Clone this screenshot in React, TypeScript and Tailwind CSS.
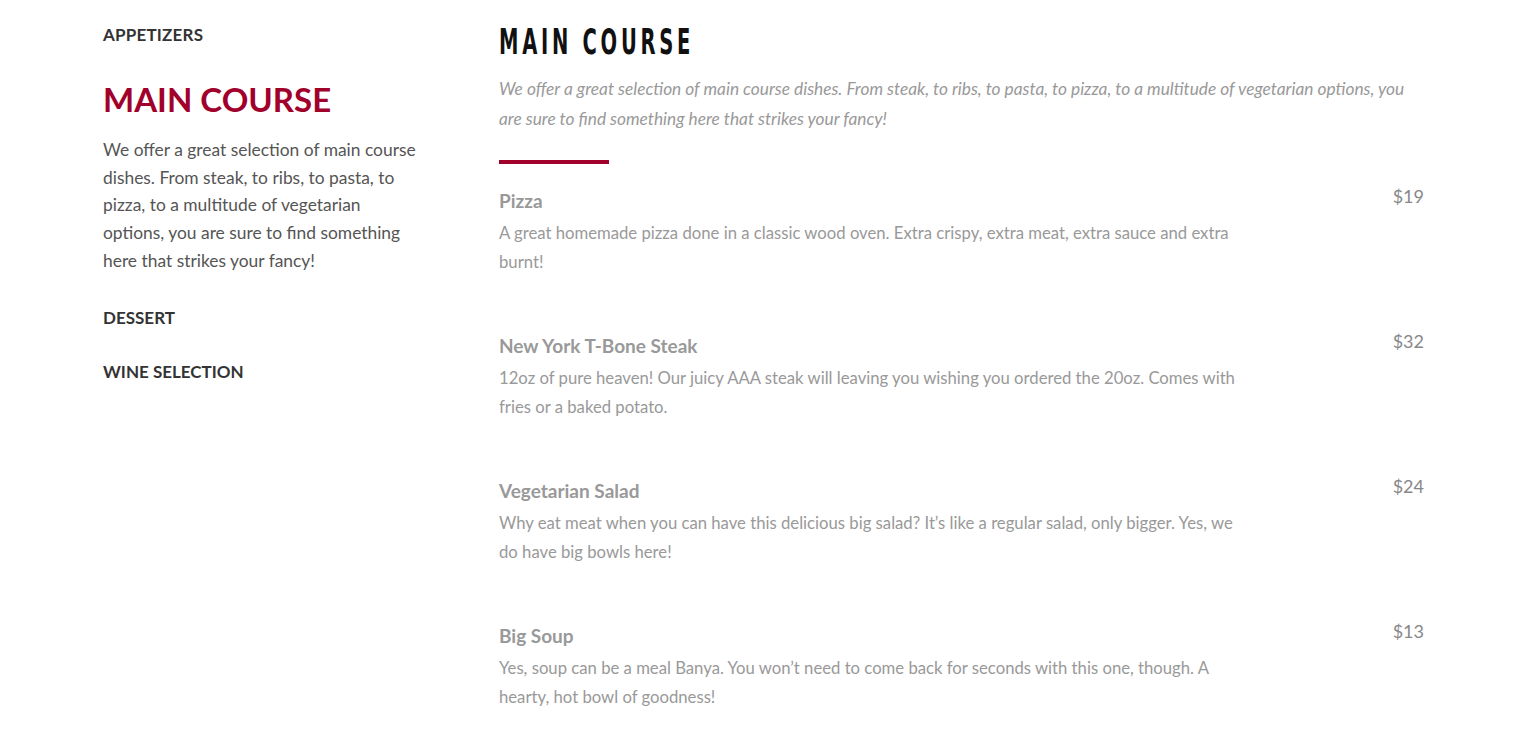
import React from "react";

const items = [
  {
    name: "Pizza",
    price: "$19",
    desc: "A great homemade pizza done in a classic wood oven. Extra crispy, extra meat, extra sauce and extra burnt!",
  },
  {
    name: "New York T-Bone Steak",
    price: "$32",
    desc: "12oz of pure heaven! Our juicy AAA steak will leaving you wishing you ordered the 20oz. Comes with fries or a baked potato.",
  },
  {
    name: "Vegetarian Salad",
    price: "$24",
    desc: "Why eat meat when you can have this delicious big salad? It\u2019s like a regular salad, only bigger. Yes, we do have big bowls here!",
  },
  {
    name: "Big Soup",
    price: "$13",
    desc: "Yes, soup can be a meal Banya. You won\u2019t need to come back for seconds with this one, though. A hearty, hot bowl of goodness!",
  },
];

export default function App() {
  return (
    <div className="h-[730px] overflow-hidden bg-white font-['Lato',sans-serif]">
      <div className="flex pl-[103px] pt-[24px]">
        <aside className="w-[396px] shrink-0">
          <div className="text-[17px] font-bold text-[#333] leading-[22px] tracking-[0.2px]">APPETIZERS</div>
          <h2 className="mt-[33px] text-[33px] font-bold text-[#a1002b] leading-[40px]">MAIN COURSE</h2>
          <p className="mt-[17px] w-[318px] text-[17.4px] leading-[27.7px] text-[#555]">
            We offer a great selection of main course dishes. From steak, to ribs, to pasta, to pizza, to a multitude of vegetarian options, you are sure to find something here that strikes your fancy!
          </p>
          <div className="mt-[32px] text-[17px] font-bold text-[#333] leading-[22px]">DESSERT</div>
          <div className="mt-[32px] text-[17px] font-bold text-[#333] leading-[22px]">WINE SELECTION</div>
        </aside>
        <main className="w-[925px] shrink-0">
          <h1 className="inline-block origin-left scale-x-[0.62] whitespace-nowrap font-['DejaVu_Sans_Condensed','DejaVu_Sans',sans-serif] font-bold text-[35px] leading-[36px] tracking-[6px] text-[#111]">
            MAIN COURSE
          </h1>
          <p className="mt-[14px] italic text-[17.3px] leading-[30px] text-[#999] w-[912px]">
            We offer a great selection of main course dishes. From steak, to ribs, to pasta, to pizza, to a multitude of vegetarian options, you are sure to find something here that strikes your fancy!
          </p>
          <div className="mt-[26px] w-[110px] h-[4px] bg-[#a1002b]" />
          <div className="mt-[24px] flex flex-col">
            {items.map((it) => (
              <div key={it.name} className="flex justify-between h-[145px]">
                <div className="w-[745px]">
                  <div className="text-[19px] font-bold text-[#999] leading-[26px]">{it.name}</div>
                  <p className="mt-[5px] text-[16.7px] leading-[29px] text-[#999]">{it.desc}</p>
                </div>
                <div className="text-[18px] text-[#888] leading-[24px] -mt-[4px]">{it.price}</div>
              </div>
            ))}
          </div>
        </main>
      </div>
    </div>
  );
}
